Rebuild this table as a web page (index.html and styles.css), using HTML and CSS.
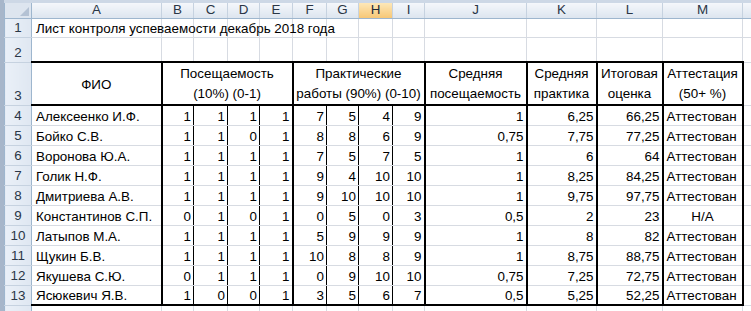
FILE: index.html
```html
<!DOCTYPE html>
<html lang="ru">
<head>
<meta charset="utf-8">
<title>Лист контроля успеваемости</title>
<link rel="stylesheet" href="styles.css">
</head>
<body>
<div class="sheet">
<table class="grid">
<colgroup>
<col class="w-rh"><col class="w-a"><col class="w-b"><col class="w-c"><col class="w-d"><col class="w-e"><col class="w-f"><col class="w-g"><col class="w-h"><col class="w-i"><col class="w-j"><col class="w-k"><col class="w-l"><col class="w-m"><col class="w-n">
</colgroup>
<thead>
<tr class="r0">
<th class="corner"><span class="tri"></span></th>
<th class="ch">A</th><th class="ch">B</th><th class="ch">C</th><th class="ch">D</th><th class="ch">E</th><th class="ch">F</th><th class="ch">G</th><th class="ch sel">H</th><th class="ch">I</th><th class="ch">J</th><th class="ch">K</th><th class="ch">L</th><th class="ch">M</th><th class="ch"></th>
</tr>
</thead>
<tbody>
<tr class="r1"><th class="rh">1</th><td class="title">Лист контроля успеваемости декабрь 2018 года</td><td></td><td></td><td></td><td></td><td></td><td></td><td></td><td></td><td></td><td></td><td></td><td></td><td></td></tr>
<tr class="r2"><th class="rh">2</th><td></td><td></td><td></td><td></td><td></td><td></td><td></td><td></td><td></td><td></td><td></td><td></td><td></td><td></td></tr>
<tr class="r3"><th class="rh">3</th>
<td class="hd hd-a">ФИО</td>
<td class="hd" colspan="4">Посещаемость<br>(10%) (0-1)</td>
<td class="hd" colspan="4">Практические<br>работы (90%) (0-10)</td>
<td class="hd">Средняя<br>посещаемость</td>
<td class="hd">Средняя<br>практика</td>
<td class="hd">Итоговая<br>оценка</td>
<td class="hd">Аттестация<br>(50+ %)</td>
<td></td></tr>
<tr class="rd"><th class="rh">4</th><td class="nm">Алексеенко И.Ф.</td><td class="n">1</td><td class="n">1</td><td class="n">1</td><td class="n sep">1</td><td class="n">7</td><td class="n">5</td><td class="n">4</td><td class="n sep">9</td><td class="n sep">1</td><td class="n sep">6,25</td><td class="n sep">66,25</td><td class="st">Аттестован</td><td></td></tr>
<tr class="rd"><th class="rh">5</th><td class="nm">Бойко С.В.</td><td class="n">1</td><td class="n">1</td><td class="n">0</td><td class="n sep">1</td><td class="n">8</td><td class="n">8</td><td class="n">6</td><td class="n sep">9</td><td class="n sep">0,75</td><td class="n sep">7,75</td><td class="n sep">77,25</td><td class="st">Аттестован</td><td></td></tr>
<tr class="rd"><th class="rh">6</th><td class="nm">Воронова Ю.А.</td><td class="n">1</td><td class="n">1</td><td class="n">1</td><td class="n sep">1</td><td class="n">7</td><td class="n">5</td><td class="n">7</td><td class="n sep">5</td><td class="n sep">1</td><td class="n sep">6</td><td class="n sep">64</td><td class="st">Аттестован</td><td></td></tr>
<tr class="rd"><th class="rh">7</th><td class="nm">Голик Н.Ф.</td><td class="n">1</td><td class="n">1</td><td class="n">1</td><td class="n sep">1</td><td class="n">9</td><td class="n">4</td><td class="n">10</td><td class="n sep">10</td><td class="n sep">1</td><td class="n sep">8,25</td><td class="n sep">84,25</td><td class="st">Аттестован</td><td></td></tr>
<tr class="rd"><th class="rh">8</th><td class="nm">Дмитриева А.В.</td><td class="n">1</td><td class="n">1</td><td class="n">1</td><td class="n sep">1</td><td class="n">9</td><td class="n">10</td><td class="n">10</td><td class="n sep">10</td><td class="n sep">1</td><td class="n sep">9,75</td><td class="n sep">97,75</td><td class="st">Аттестован</td><td></td></tr>
<tr class="rd"><th class="rh">9</th><td class="nm">Константинов С.П.</td><td class="n">0</td><td class="n">1</td><td class="n">0</td><td class="n sep">1</td><td class="n">0</td><td class="n">5</td><td class="n">0</td><td class="n sep">3</td><td class="n sep">0,5</td><td class="n sep">2</td><td class="n sep">23</td><td class="st na">Н/А</td><td></td></tr>
<tr class="rd"><th class="rh">10</th><td class="nm">Латыпов М.А.</td><td class="n">1</td><td class="n">1</td><td class="n">1</td><td class="n sep">1</td><td class="n">5</td><td class="n">9</td><td class="n">9</td><td class="n sep">9</td><td class="n sep">1</td><td class="n sep">8</td><td class="n sep">82</td><td class="st">Аттестован</td><td></td></tr>
<tr class="rd"><th class="rh">11</th><td class="nm">Щукин Б.В.</td><td class="n">1</td><td class="n">1</td><td class="n">1</td><td class="n sep">1</td><td class="n">10</td><td class="n">8</td><td class="n">8</td><td class="n sep">9</td><td class="n sep">1</td><td class="n sep">8,75</td><td class="n sep">88,75</td><td class="st">Аттестован</td><td></td></tr>
<tr class="rd"><th class="rh">12</th><td class="nm">Якушева С.Ю.</td><td class="n">0</td><td class="n">1</td><td class="n">1</td><td class="n sep">1</td><td class="n">0</td><td class="n">9</td><td class="n">10</td><td class="n sep">10</td><td class="n sep">0,75</td><td class="n sep">7,25</td><td class="n sep">72,75</td><td class="st">Аттестован</td><td></td></tr>
<tr class="rd last"><th class="rh">13</th><td class="nm">Ясюкевич Я.В.</td><td class="n">1</td><td class="n">0</td><td class="n">0</td><td class="n sep">1</td><td class="n">3</td><td class="n">5</td><td class="n">6</td><td class="n sep">7</td><td class="n sep">0,5</td><td class="n sep">5,25</td><td class="n sep">52,25</td><td class="st">Аттестован</td><td></td></tr>
<tr class="r14"><th class="rh"></th><td></td><td></td><td></td><td></td><td></td><td></td><td></td><td></td><td></td><td></td><td></td><td></td><td></td><td></td></tr>
</tbody>
</table>
</div>
</body>
</html>
```
FILE: styles.css
```css
html, body {
  margin: 0;
  padding: 0;
  background: #ffffff;
  overflow: hidden;
}
body {
  font-family: "Liberation Sans", Arial, sans-serif;
  font-size: 13.4px;
  color: #000;
}
.sheet {
  width: 751px;
  height: 311px;
  box-sizing: border-box;
  padding: 3px 0 0 4px;
  background: linear-gradient(90deg, #a7b6ca 0, #a7b6ca 4px, #cdd8e6 4px);
  overflow: hidden;
}
.grid {
  border-collapse: collapse;
  table-layout: fixed;
  width: 760px;
  background: #fff;
}
.w-rh { width: 27px; }
.w-a { width: 130px; }
.w-b { width: 32px; }
.w-c { width: 34px; }
.w-d { width: 32px; }
.w-e { width: 33px; }
.w-f { width: 34px; }
.w-g { width: 32px; }
.w-h { width: 34px; }
.w-i { width: 32px; }
.w-j { width: 102px; }
.w-k { width: 70px; }
.w-l { width: 66px; }
.w-m { width: 80px; }
.w-n { width: 22px; }

th, td {
  padding: 0;
  white-space: nowrap;
  overflow: hidden;
  font-weight: normal;
}
td {
  border: 1px solid #d7dbe2;
  padding: 0 3px;
  vertical-align: bottom;
  line-height: 17px;
}
.r0 { height: 15px; }
.r1 { height: 19px; }
.r2 { height: 25px; }
.r3 { height: 43px; }
.rd { height: 20px; }
.r14 { height: 12px; }

.ch {
  background: linear-gradient(#f4f7fb, #dde5ef);
  border: 1px solid #9eb6ce;
  border-top: none;
  border-left-color: #c6d2e0;
  border-right-color: #c6d2e0;
  border-bottom-color: #9eb6ce;
  color: #2a3646;
  text-align: center;
  vertical-align: middle;
  line-height: 14px;
}
.ch.sel {
  background: linear-gradient(#fde7b8, #f6c776);
  color: #1d2a3a;
}
.corner {
  position: relative;
  background: #dde5ef;
  border: 1px solid #9eb6ce;
  border-top: none;
}
.tri {
  position: absolute;
  right: 2px;
  bottom: 2px;
  width: 0;
  height: 0;
  border-left: 9px solid transparent;
  border-bottom: 9px solid #b4c2d4;
}
.rh {
  background: linear-gradient(90deg, #eaf0f8, #dfe7f1);
  border: 1px solid #9eb6ce;
  border-top-color: #c6d2e0;
  border-bottom-color: #c6d2e0;
  color: #2a3646;
  text-align: center;
  vertical-align: bottom;
  line-height: 18px;
}
.title {
  overflow: visible;
  padding-left: 4px;
}
.hd {
  border: 2px solid #000;
  text-align: center;
  white-space: nowrap;
  line-height: 20px;
  vertical-align: bottom;
  padding: 0 2px;
}
.hd-a {
  vertical-align: middle;
  border-left: 1px solid #000;
  padding-top: 2px;
}
.nm {
  padding-left: 4px;
  border-left: 1px solid #000;
  border-right: 2px solid #000;
}
.n {
  text-align: right;
  padding-right: 2px;
  border-right: 1px solid #000;
}
.n.sep {
  border-right: 2px solid #000;
}
.st {
  padding-left: 3px;
  border-right: 2px solid #000;
}
.st.na {
  text-align: center;
}
.last td {
  border-bottom: 2px solid #000;
}
.last td:last-child {
  border-bottom-color: #d7dbe2;
  border-bottom-width: 1px;
}
```
